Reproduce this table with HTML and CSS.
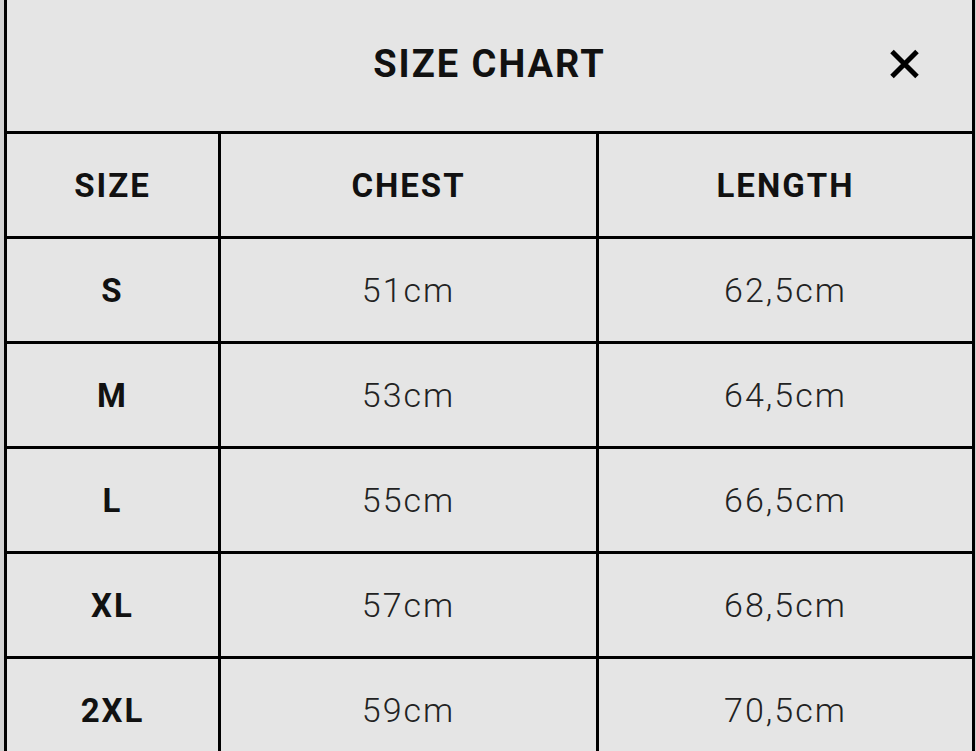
FILE: index.html
```html
<!DOCTYPE html>
<html>
<head>
<meta charset="utf-8">
<link rel="stylesheet" href="styles.css">
</head>
<body>
<div class="modal">
  <div class="chart">
    <div class="header">
      <span></span>
      <h1 class="title">SIZE CHART</h1>
      <button class="close" aria-label="Close">
        <svg width="31" height="30" viewBox="0 0 31 30"><path d="M3 2.5 L28 27.5 M28 2.5 L3 27.5" stroke="#000" stroke-width="5" fill="none"/></svg>
      </button>
    </div>
    <div class="cell head">SIZE</div>
    <div class="cell head">CHEST</div>
    <div class="cell head">LENGTH</div>

    <div class="cell size">S</div>
    <div class="cell val">51cm</div>
    <div class="cell val">62,5cm</div>

    <div class="cell size">M</div>
    <div class="cell val">53cm</div>
    <div class="cell val">64,5cm</div>

    <div class="cell size">L</div>
    <div class="cell val">55cm</div>
    <div class="cell val">66,5cm</div>

    <div class="cell size">XL</div>
    <div class="cell val">57cm</div>
    <div class="cell val">68,5cm</div>

    <div class="cell size">2XL</div>
    <div class="cell val">59cm</div>
    <div class="cell val">70,5cm</div>
  </div>
</div>
</body>
</html>
```

FILE: styles.css
```css
html, body {
  margin: 0;
  padding: 0;
  height: 100%;
  overflow: hidden;
  background: #d2d2d2;
}

.modal {
  margin-left: 4px;
  width: 971px;
}

.chart {
  display: grid;
  grid-template-columns: 211px 375px 373px;
  grid-template-rows: 131px repeat(6, 102px);
  gap: 3px;
  padding: 0 3px;
  background: #000;
}

.header {
  grid-column: 1 / -1;
  background: #e5e5e5;
  display: grid;
  grid-template-columns: 1fr auto 1fr;
  align-items: center;
}

.title {
  margin: 0;
  font-family: Roboto, "Liberation Sans", sans-serif;
  font-weight: 700;
  font-size: 38px;
  letter-spacing: 2px;
  color: #111;
  padding-bottom: 4px;
}

.close {
  justify-self: end;
  margin-right: 52px;
  padding: 0;
  border: 0;
  background: none;
  width: 31px;
  height: 30px;
  margin-bottom: 4px;
}

.close svg {
  display: block;
}

.cell {
  background: #e5e5e5;
  display: flex;
  align-items: center;
  justify-content: center;
  color: #111;
}

.head, .size {
  font-family: Roboto, "Liberation Sans", sans-serif;
  font-weight: 700;
  font-size: 33px;
  letter-spacing: 2px;
}

.val {
  font-family: Roboto, "Liberation Sans", sans-serif;
  font-weight: 300;
  font-size: 34px;
  letter-spacing: 2px;
  color: #222;
}
```
